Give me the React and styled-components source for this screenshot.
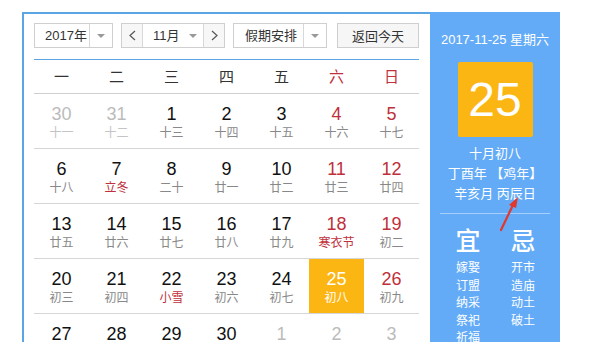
import React from 'react';
import styled, { createGlobalStyle } from 'styled-components';

const GlobalStyle = createGlobalStyle`
  html, body { margin: 0; padding: 0; background: #fff; }
  body {
    font-family: "Liberation Sans", Arial, "Noto Sans CJK SC", sans-serif;
    color: #333;
  }
`;

const Page = styled.div`
  padding: 12px 0 0 22px;
  height: 342px;
  box-sizing: border-box;
  overflow: hidden;
`;

const Frame = styled.div`
  display: flex;
  width: 538px;
  border-top: 2px solid #5ba5e5;
  border-left: 2px solid #5ba5e5;
  background: #fff;
  height: 340px;
  box-sizing: border-box;
`;

const Main = styled.div`
  width: 406px;
  padding: 9px 11px 0 10px;
  box-sizing: border-box;
`;

const Toolbar = styled.div`
  display: flex;
  align-items: center;
  height: 25px;
  padding-bottom: 11px;
  border-bottom: 1px solid #5ba5e5;
`;

const Select = styled.div`
  display: flex;
  flex-shrink: 0;
  height: 25px;
  box-sizing: border-box;
  border: 1px solid #cfcfcf;
  margin-right: ${p => p.$gap || 8}px;
  font-size: 13px;
  line-height: 23px;
  color: #333;
  background: #fff;
`;

const SelText = styled.div`
  width: ${p => p.$w}px;
  padding-left: ${p => p.$pl || 0}px;
  box-sizing: border-box;
  white-space: nowrap;
`;

const Caret = styled.div`
  width: ${p => p.$w || 22}px;
  border-left: ${p => (p.$line ? '1px solid #d8d8d8' : 'none')};
  display: flex;
  align-items: center;
  justify-content: center;
  &::after {
    content: '';
    border-left: 4px solid transparent;
    border-right: 4px solid transparent;
    border-top: 4px solid #999;
  }
`;

const Step = styled.div`
  width: 20px;
  background: #f7f7f7;
  display: flex;
  align-items: center;
  justify-content: center;
  border-left: ${p => (p.$right ? '1px solid #d8d8d8' : 'none')};
  border-right: ${p => (p.$right ? 'none' : '1px solid #d8d8d8')};
  svg { display: block; }
`;

const TodayBtn = styled.button`
  flex-shrink: 0;
  width: 82px;
  height: 25px;
  border: 1px solid #cfcfcf;
  background: #f6f6f6;
  font-family: inherit;
  font-size: 13px;
  color: #333;
  padding: 0;
`;

const Grid = styled.div`
  display: grid;
  grid-template-columns: repeat(7, 55px);
`;

const Head = styled.div`
  height: 33px;
  line-height: 33px;
  text-align: center;
  font-size: 15px;
  color: ${p => (p.$weekend ? '#c0303c' : '#333')};
  border-bottom: 1px solid #cfcfcf;
`;

const Cell = styled.div`
  height: 55px;
  padding-top: 10px;
  box-sizing: border-box;
  text-align: center;
  border-bottom: 1px solid #d6d6d6;
  background: ${p => (p.$today ? '#fcb614' : 'transparent')};
`;

const Num = styled.div`
  font-size: 18px;
  line-height: 20px;
  color: ${p => p.$color};
`;

const Lunar = styled.div`
  font-size: 12px;
  line-height: 18px;
  color: ${p => p.$color};
`;

const Side = styled.div`
  position: relative;
  width: 130px;
  background: #63abf7;
  color: #fff;
  margin-top: -2px;
  padding-top: 20px;
  box-sizing: border-box;
  text-align: center;
`;

const DateLine = styled.div`
  font-size: 13px;
  line-height: 16px;
`;

const DayBox = styled.div`
  width: 75px;
  height: 75px;
  margin: 14px auto 0;
  border-radius: 2px;
  background: #fcb614;
  font-size: 48px;
  line-height: 75px;
  color: #fff;
`;

const InfoLines = styled.div`
  margin-top: 7px;
  font-size: 13px;
  line-height: 20px;
`;

const Divider = styled.div`
  margin: 9px 10px 0;
  height: 1px;
  background: #a6cff9;
`;

const Advice = styled.div`
  display: grid;
  grid-template-columns: 24px 24px;
  column-gap: 31px;
  padding-left: 26px;
  margin-top: 12px;
`;

const AdviceCol = styled.div`
  display: flex;
  flex-direction: column;
  align-items: center;
`;

const AdviceHead = styled.div`
  font-size: 25px;
  line-height: 30px;
  font-weight: 500;
  margin-bottom: 4px;
`;

const AdviceItem = styled.div`
  font-size: 12px;
  line-height: 17.5px;
  white-space: nowrap;
`;

const Arrow = styled.svg`
  position: absolute;
  left: 66px;
  top: 183px;
`;

const RED = '#c0303c';
const GREY = '#bbbbbb';

const weeks = ['一', '二', '三', '四', '五', '六', '日'];

const rows = [
  [['30', '十一', 1], ['31', '十二', 1], ['1', '十三'], ['2', '十四'], ['3', '十五'], ['4', '十六'], ['5', '十七']],
  [['6', '十八'], ['7', '立冬', 0, 1], ['8', '二十'], ['9', '廿一'], ['10', '廿二'], ['11', '廿三'], ['12', '廿四']],
  [['13', '廿五'], ['14', '廿六'], ['15', '廿七'], ['16', '廿八'], ['17', '廿九'], ['18', '寒衣节', 0, 1], ['19', '初二']],
  [['20', '初三'], ['21', '初四'], ['22', '小雪', 0, 1], ['23', '初六'], ['24', '初七'], ['25', '初八', 0, 0, 1], ['26', '初九']],
  [['27', '初十'], ['28', '十一'], ['29', '十二'], ['30', '十三'], ['1', '十四', 1], ['2', '十五', 1], ['3', '十六', 1]],
];

const Chevron = ({ right }) => (
  <svg width="7" height="11" viewBox="0 0 7 11">
    <path d={right ? 'M1 1 L6 5.5 L1 10' : 'M6 1 L1 5.5 L6 10'} fill="none" stroke="#555" strokeWidth="1.2" />
  </svg>
);

const App = () => {
  return (
    <Page>
      <GlobalStyle />
      <Frame>
        <Main>
          <Toolbar>
            <Select>
              <SelText $w={54} $pl={10}>2017年</SelText>
              <Caret $line />
            </Select>
            <Select>
              <Step><Chevron /></Step>
              <SelText $w={40} $pl={10}>11月</SelText>
              <Caret $w={20} />
              <Step $right><Chevron right /></Step>
            </Select>
            <Select $gap={10}>
              <SelText $w={69} $pl={11}>假期安排</SelText>
              <Caret $line />
            </Select>
            <TodayBtn>返回今天</TodayBtn>
          </Toolbar>
          <Grid>
            {weeks.map((w, i) => (
              <Head key={w} $weekend={i > 4}>{w}</Head>
            ))}
            {rows.map((row, r) =>
              row.map(([n, l, other, term, today], c) => {
                const weekend = c > 4;
                let numColor = weekend ? RED : '#111';
                let lunarColor = term ? RED : '#888';
                if (other) {
                  numColor = GREY;
                  lunarColor = '#c4c4c4';
                }
                if (today) {
                  numColor = '#fff';
                  lunarColor = '#fff';
                }
                return (
                  <Cell key={`${r}-${c}`} $today={today}>
                    <Num $color={numColor}>{n}</Num>
                    <Lunar $color={lunarColor}>{l}</Lunar>
                  </Cell>
                );
              })
            )}
          </Grid>
        </Main>
        <Side>
          <DateLine>2017-11-25 星期六</DateLine>
          <DayBox>25</DayBox>
          <InfoLines>
            <div>十月初八</div>
            <div>丁酉年 【鸡年】</div>
            <div>辛亥月 丙辰日</div>
          </InfoLines>
          <Divider />
          <Advice>
            <AdviceCol>
              <AdviceHead>宜</AdviceHead>
              <AdviceItem>嫁娶</AdviceItem>
              <AdviceItem>订盟</AdviceItem>
              <AdviceItem>纳采</AdviceItem>
              <AdviceItem>祭祀</AdviceItem>
              <AdviceItem>祈福</AdviceItem>
            </AdviceCol>
            <AdviceCol>
              <AdviceHead>忌</AdviceHead>
              <AdviceItem>开市</AdviceItem>
              <AdviceItem>造庙</AdviceItem>
              <AdviceItem>动土</AdviceItem>
              <AdviceItem>破土</AdviceItem>
            </AdviceCol>
          </Advice>
          <Arrow width="30" height="40" viewBox="0 0 30 40">
            <path d="M5 35 L17 10" stroke="#e2372c" strokeWidth="2.2" strokeLinecap="round" />
            <path d="M22 2 L13 10 L20 13 Z" fill="#e2372c" />
          </Arrow>
        </Side>
      </Frame>
    </Page>
  );
};

export default App;
